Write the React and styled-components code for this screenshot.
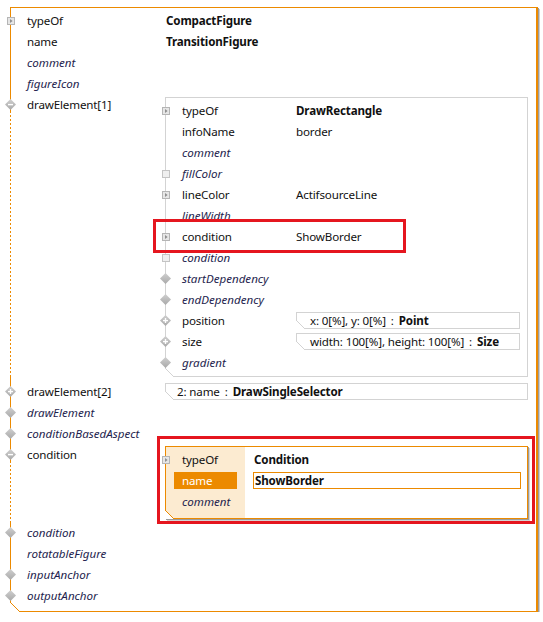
import React from 'react';
import styled, { createGlobalStyle, css } from 'styled-components';

const ORANGE = '#ec8a00';
const LINE = '#d3d3d3';
const RED = '#e5161f';

const GlobalStyle = createGlobalStyle`
  html, body { margin: 0; padding: 0; background: #fff; }
  body {
    font-family: "Noto Sans", "Open Sans", sans-serif;
    font-size: 11.6px;
    letter-spacing: -0.15px;
    color: #111;
  }
  * { box-sizing: border-box; }
`;

const chamfer = (size, color) => css`
  &::after {
    content: '';
    position: absolute;
    left: -1px;
    bottom: -1px;
    width: ${size}px;
    height: ${size}px;
    background: linear-gradient(
      to top right,
      #fff 0 calc(50% - 0.6px),
      ${color} calc(50% - 0.6px) calc(50% + 0.6px),
      transparent calc(50% + 0.6px)
    );
    pointer-events: none;
  }
`;

const Panel = styled.div`
  position: relative;
  margin: 7px 0 0 10px;
  width: 528px;
  border: 1px solid ${ORANGE};
  border-right-width: 2px;
  padding: 2px 0 5px;
  background: #fff;
  box-shadow: 1px 1px 0 #9c9c9c, 2px 2px 0 #cdcdcd;
  ${chamfer(10, ORANGE)}
`;

const Row = styled.div`
  position: relative;
  display: grid;
  grid-template-columns: ${(p) => p.$labelWidth}px minmax(0, 1fr);
  padding-left: ${(p) => (p.$pad ?? 16)}px;
  min-height: 21px;
  ${(p) =>
    p.$dotted &&
    css`
      &::before {
        content: '';
        position: absolute;
        left: -1px;
        top: 17px;
        bottom: ${p.$dotted}px;
        width: 1px;
        background: repeating-linear-gradient(
          to bottom,
          ${ORANGE} 0 2px,
          #fff 2px 4px
        );
      }
    `}
`;

const Label = styled.div`
  height: 21px;
  line-height: 21px;
  white-space: nowrap;
  font-style: ${(p) => (p.$italic ? 'italic' : 'normal')};
  letter-spacing: ${(p) => (p.$italic ? '0' : '-0.15px')};
  color: ${(p) => (p.$italic ? '#1e1e4e' : '#111')};
`;

const CondLabel = styled(Label)`
  padding-left: 16px;
  ${(p) =>
    p.$selected &&
    css`
      margin: 2px 0 2px 8px;
      padding-left: 8px;
      width: 63px;
      height: 17px;
      line-height: 17px;
      background: ${ORANGE};
      color: #fff;
    `}
`;

const Value = styled.div`
  line-height: 21px;
  white-space: nowrap;
  font-weight: ${(p) => (p.$bold ? 700 : 400)};
  color: #111;
  padding-left: ${(p) => p.$pad || 0}px;
`;

const IconSlot = styled.span`
  position: absolute;
  left: -6px;
  top: 5px;
  width: 11px;
  height: 11px;
  display: flex;
  align-items: center;
  justify-content: center;
  z-index: 2;
  svg { display: block; }
`;

const NestedBox = styled.div`
  position: relative;
  width: 363px;
  margin: 3px 0 4px -1px;
  border: 1px solid ${LINE};
  padding: 2px 0 3px;
  background: #fff;
  ${chamfer(9, LINE)}
`;

const ValueBox = styled.div`
  position: relative;
  display: flex;
  align-items: center;
  width: ${(p) => p.$width}px;
  height: 17px;
  margin: 2px 0 2px ${(p) => p.$shift || 0}px;
  border: 1px solid ${LINE};
  padding-left: ${(p) => p.$pad}px;
  line-height: 15px;
  white-space: nowrap;
  background: #fff;
  ${chamfer(9, LINE)}
`;

const Sep = styled.span`
  margin: 0 5px;
`;

const Strong = styled.span`
  font-weight: 700;
`;

const Frame = styled.div`
  position: absolute;
  left: ${(p) => p.$l}px;
  top: ${(p) => p.$t}px;
  width: ${(p) => p.$w}px;
  height: ${(p) => p.$h}px;
  border: 3px solid ${RED};
  pointer-events: none;
  z-index: 3;
`;

const AnnotWrap = styled.div`
  position: relative;
  width: 363px;
  margin: 2px 0 3px -1px;
`;

const CondBox = styled.div`
  position: relative;
  border: 1px solid ${ORANGE};
  padding: 2px 0 6px;
  background: linear-gradient(to right, #fcebd1 0 79px, #fff 79px);
  box-shadow: 1px 1px 0 #9c9c9c, 2px 2px 0 #d4d4d4;
  ${chamfer(9, ORANGE)}
`;

const EditBox = styled.div`
  height: 17px;
  margin: 2px 6px 2px 8px;
  border: 1px solid ${ORANGE};
  padding-left: 1px;
  line-height: 15px;
  font-weight: 700;
  white-space: nowrap;
`;

/* ---------- icons ---------- */

const ExpandIcon = () => (
  <svg width="8" height="8" viewBox="0 0 8 8">
    <rect x="0.5" y="0.5" width="7" height="7" fill="#e6e6e6" stroke="#b5b5b5" />
    <polygon points="3,2 3,6 5.6,4" fill="#8f8f8f" />
  </svg>
);

const SquareIcon = () => (
  <svg width="8" height="8" viewBox="0 0 8 8">
    <rect x="0.5" y="0.5" width="7" height="7" fill="#efefef" stroke="#c4c4c4" />
  </svg>
);

const Diamond = ({ mark }) => (
  <svg width="11" height="11" viewBox="0 0 11 11">
    <defs>
      <linearGradient id={`dg-${mark || 'n'}`} x1="0" y1="0" x2="0" y2="1">
        <stop offset="0" stopColor="#cfcfcf" />
        <stop offset="1" stopColor="#a9a9a9" />
      </linearGradient>
    </defs>
    <polygon points="5.5,0 11,5.5 5.5,11 0,5.5" fill={`url(#dg-${mark || 'n'})`} />
    {(mark === 'minus' || mark === 'plus') && (
      <rect x="3" y="4.9" width="5" height="1.4" fill="#fff" />
    )}
    {mark === 'plus' && <rect x="4.8" y="3" width="1.4" height="5" fill="#fff" />}
  </svg>
);

const icons = {
  expand: <ExpandIcon />,
  square: <SquareIcon />,
  diamond: <Diamond />,
  minus: <Diamond mark="minus" />,
  plus: <Diamond mark="plus" />,
};

const Icon = ({ kind }) => (kind ? <IconSlot>{icons[kind]}</IconSlot> : null);

/* ---------- data ---------- */

const innerRows = [
  { label: 'typeOf', icon: 'expand', value: 'DrawRectangle', bold: true },
  { label: 'infoName', value: 'border' },
  { label: 'comment', italic: true },
  { label: 'fillColor', italic: true, icon: 'square' },
  { label: 'lineColor', icon: 'expand', value: 'ActifsourceLine' },
  { label: 'lineWidth', italic: true },
  { label: 'condition', icon: 'expand', value: 'ShowBorder', framed: true },
  { label: 'condition', italic: true, icon: 'square' },
  { label: 'startDependency', italic: true, icon: 'diamond' },
  { label: 'endDependency', italic: true, icon: 'diamond' },
  { label: 'position', icon: 'plus', box: ['x: 0[%], y: 0[%]', 'Point'] },
  { label: 'size', icon: 'plus', box: ['width: 100[%], height: 100[%]', 'Size'] },
  { label: 'gradient', italic: true, icon: 'diamond' },
];

const InnerRow = ({ r }) => (
  <Row $labelWidth={114}>
    <Icon kind={r.icon} />
    <Label $italic={r.italic}>{r.label}</Label>
    {r.box ? (
      <ValueBox $width={224} $pad={13}>
        {r.box[0]}
        <Sep>:</Sep>
        <Strong>{r.box[1]}</Strong>
      </ValueBox>
    ) : (
      <Value $bold={r.bold}>{r.value}</Value>
    )}
    {r.framed && <Frame $l={-13} $t={-7} $w={253} $h={34} />}
  </Row>
);

const SimpleRow = ({ label, italic, icon, value, bold }) => (
  <Row $labelWidth={139}>
    <Icon kind={icon} />
    <Label $italic={italic}>{label}</Label>
    <Value $bold={bold}>{value}</Value>
  </Row>
);

export default function App() {
  return (
    <>
      <GlobalStyle />
      <Panel>
        <SimpleRow label="typeOf" icon="expand" value="CompactFigure" bold />
        <SimpleRow label="name" value="TransitionFigure" bold />
        <SimpleRow label="comment" italic />
        <SimpleRow label="figureIcon" italic />

        <Row $labelWidth={139} $dotted={4}>
          <Icon kind="minus" />
          <Label>drawElement[1]</Label>
          <div>
            <NestedBox>
              {innerRows.map((r, i) => (
                <InnerRow key={i} r={r} />
              ))}
            </NestedBox>
          </div>
        </Row>

        <Row $labelWidth={139}>
          <Icon kind="plus" />
          <Label>drawElement[2]</Label>
          <ValueBox $width={363} $pad={11} $shift={-1}>
            2: name
            <Sep>:</Sep>
            <Strong>DrawSingleSelector</Strong>
          </ValueBox>
        </Row>
        <SimpleRow label="drawElement" italic icon="diamond" />
        <SimpleRow label="conditionBasedAspect" italic icon="diamond" />

        <Row $labelWidth={139} $dotted={1}>
          <Icon kind="minus" />
          <Label>condition</Label>
          <div>
            <AnnotWrap>
              <CondBox>
                <Row $labelWidth={79} $pad={0}>
                  <Icon kind="expand" />
                  <CondLabel>typeOf</CondLabel>
                  <Value $bold $pad={9}>Condition</Value>
                </Row>
                <Row $labelWidth={79} $pad={0}>
                  <CondLabel $selected>name</CondLabel>
                  <EditBox>ShowBorder</EditBox>
                </Row>
                <Row $labelWidth={79} $pad={0}>
                  <CondLabel $italic>comment</CondLabel>
                  <Value />
                </Row>
              </CondBox>
              <Frame $l={-8} $t={-10} $w={378} $h={88} />
            </AnnotWrap>
          </div>
        </Row>

        <SimpleRow label="condition" italic icon="diamond" />
        <SimpleRow label="rotatableFigure" italic />
        <SimpleRow label="inputAnchor" italic icon="diamond" />
        <SimpleRow label="outputAnchor" italic icon="diamond" />
      </Panel>
    </>
  );
}
